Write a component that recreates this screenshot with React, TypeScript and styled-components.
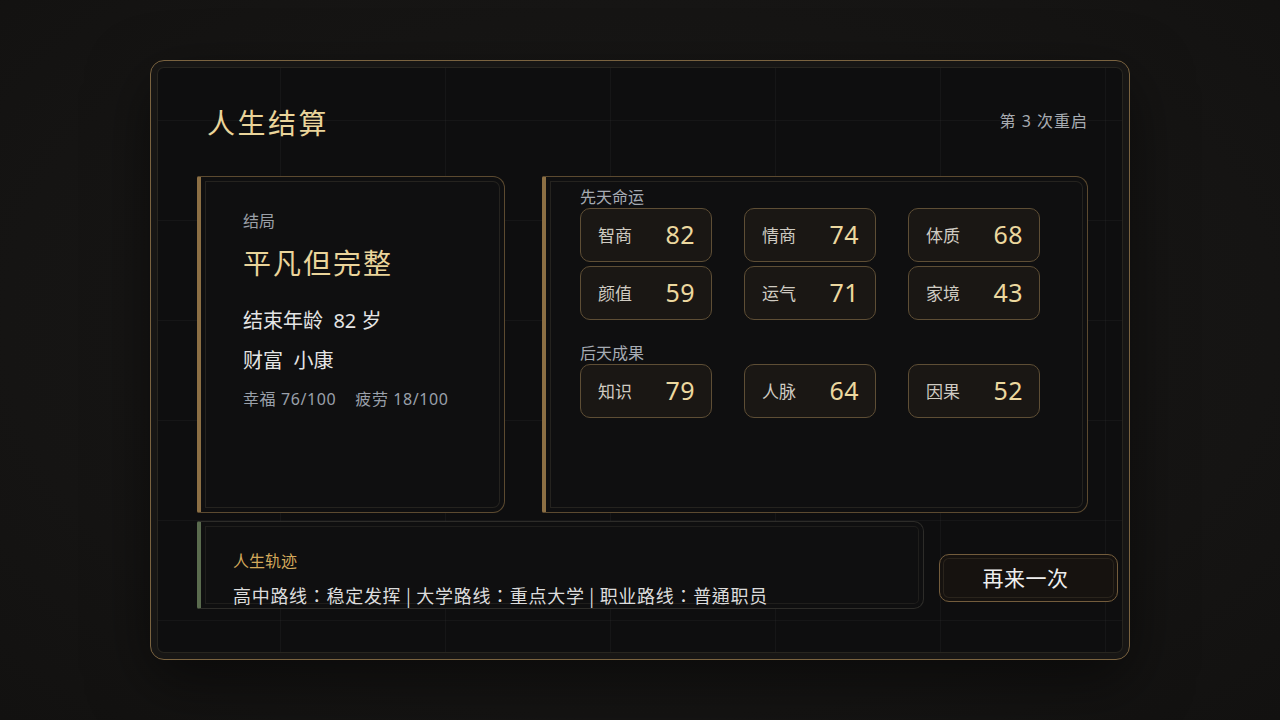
import styled, { createGlobalStyle } from 'styled-components';

const GlobalStyle = createGlobalStyle`
	html, body {
		margin: 0;
		padding: 0;
		background: #161514;
	}
	body {
		font-family: 'Noto Sans', 'Noto Sans CJK SC', sans-serif;
	}
	* {
		box-sizing: border-box;
	}
`;

const innate = [
	{ label: '智商', value: 82 },
	{ label: '情商', value: 74 },
	{ label: '体质', value: 68 },
	{ label: '颜值', value: 59 },
	{ label: '运气', value: 71 },
	{ label: '家境', value: 43 },
];

const acquired = [
	{ label: '知识', value: 79 },
	{ label: '人脉', value: 64 },
	{ label: '因果', value: 52 },
];

const StatGrid = ({ items }: { items: { label: string; value: number }[] }) => (
	<Grid>
		{items.map((s) => (
			<StatBox key={s.label}>
				<StatLabel>{s.label}</StatLabel>
				<StatValue>{s.value}</StatValue>
			</StatBox>
		))}
	</Grid>
);

export default function App() {
	return (
		<Page>
			<GlobalStyle />
			<Panel>
				<Header>
					<Title>人生结算</Title>
					<Restart>第 3 次重启</Restart>
				</Header>
				<TopRow>
					<EndingCard>
						<Caption>结局</Caption>
						<Ending>平凡但完整</Ending>
						<InfoLine $gap={26}>结束年龄&nbsp; 82 岁</InfoLine>
						<InfoLine $gap={12}>财富&nbsp; 小康</InfoLine>
						<Meta>幸福 76/100&nbsp;&nbsp;&nbsp; 疲劳 18/100</Meta>
					</EndingCard>
					<StatsCard>
						<SectionLabel $gap={0}>先天命运</SectionLabel>
						<StatGrid items={innate} />
						<SectionLabel $gap={22}>后天成果</SectionLabel>
						<StatGrid items={acquired} />
					</StatsCard>
				</TopRow>
				<BottomRow>
					<TrackCard>
						<TrackTitle>人生轨迹</TrackTitle>
						<TrackText>高中路线：稳定发挥 | 大学路线：重点大学 | 职业路线：普通职员</TrackText>
					</TrackCard>
					<RetryButton>再来一次</RetryButton>
				</BottomRow>
			</Panel>
		</Page>
	);
}

const Page = styled.div`
	width: 1280px;
	height: 720px;
	display: flex;
	justify-content: center;
	align-items: flex-start;
	padding-top: 60px;
	background: radial-gradient(ellipse at 50% 45%, #1a1918 0%, #151413 70%, #121110 100%);
`;

const Panel = styled.div`
	width: 980px;
	height: 600px;
	padding: 41px 41px 0 46px;
	border: 1px solid #7a6340;
	border-radius: 14px;
	background-color: #0e0e0f;
	background-image: linear-gradient(to right, rgba(255, 255, 255, 0.03) 1px, transparent 1px),
		linear-gradient(to bottom, rgba(255, 255, 255, 0.03) 1px, transparent 1px);
	background-size: 165px 100px;
	background-position: 129px 59px;
	box-shadow: inset 0 0 0 6px rgba(14, 14, 15, 0.6), inset 0 0 0 7px #27251f,
		0 20px 60px rgba(0, 0, 0, 0.5);
`;

const Header = styled.div`
	display: flex;
	justify-content: space-between;
	align-items: center;
	height: 40px;
	margin-bottom: 34px;
`;

const Title = styled.h1`
	margin: 0 0 0 10px;
	font-family: 'Noto Sans CJK SC', sans-serif;
	font-size: 28px;
	line-height: 36px;
	font-weight: 400;
	letter-spacing: 2.5px;
	color: #ead49a;
`;

const Restart = styled.div`
	margin-bottom: 4px;
	font-size: 16px;
	letter-spacing: 1px;
	color: #a8acb2;
`;

const TopRow = styled.div`
	display: grid;
	grid-template-columns: 308px 1fr;
	column-gap: 37px;
	height: 337px;
`;

const Card = styled.div`
	border: 1px solid #5c4a30;
	border-left: 4px solid #8c6f44;
	border-radius: 2px 12px 12px 2px;
	background: #0f0f10;
	box-shadow: inset 0 0 0 4px #0f0f10, inset 0 0 0 5px #25231f;
`;

const EndingCard = styled(Card)`
	padding: 33px 20px 0 42px;
`;

const Caption = styled.div`
	font-size: 16px;
	line-height: 22px;
	color: #9ba0a8;
`;

const Ending = styled.div`
	margin-top: 13px;
	font-size: 28px;
	line-height: 36px;
	font-weight: 400;
	letter-spacing: 2px;
	color: #ead49a;
`;

const InfoLine = styled.div<{ $gap: number }>`
	margin-top: ${(p) => p.$gap}px;
	font-size: 20px;
	line-height: 28px;
	color: #e4e4e4;
`;

const Meta = styled.div`
	margin-top: 13px;
	font-size: 16px;
	line-height: 22px;
	letter-spacing: 0.6px;
	color: #9aa0aa;
`;

const StatsCard = styled(Card)`
	padding: 9px 20px 0 34px;
`;

const SectionLabel = styled.div<{ $gap: number }>`
	margin-top: ${(p) => p.$gap}px;
	font-size: 16px;
	line-height: 22px;
	color: #a6abb3;
`;

const Grid = styled.div`
	display: grid;
	grid-template-columns: repeat(3, 132px);
	column-gap: 32px;
	row-gap: 4px;
`;

const StatBox = styled.div`
	height: 54px;
	display: flex;
	justify-content: space-between;
	align-items: center;
	padding: 0 16px 2px 17px;
	border: 1px solid #5e4e35;
	border-radius: 10px;
	background: #1a1714;
`;

const StatLabel = styled.span`
	font-size: 17px;
	color: #cfcbc2;
`;

const StatValue = styled.span`
	font-family: 'Noto Sans', sans-serif;
	font-size: 25px;
	color: #ecd89f;
	letter-spacing: 0.5px;
`;

const BottomRow = styled.div`
	display: flex;
	align-items: flex-end;
	gap: 15px;
	margin-top: 8px;
	margin-right: -30px;
	height: 88px;
`;

const TrackCard = styled.div`
	width: 728px;
	height: 88px;
	padding: 28px 20px 0 32px;
	border: 1px solid #2d2c29;
	border-left: 4px solid #5a6b4e;
	border-radius: 2px 10px 10px 2px;
	background: #0f0f10;
	box-shadow: inset 0 0 0 4px #0f0f10, inset 0 0 0 5px #1f1e1c;
`;

const TrackTitle = styled.div`
	font-size: 16px;
	line-height: 22px;
	color: #d3a95c;
`;

const TrackText = styled.div`
	margin-top: 11px;
	font-family: 'Noto Sans CJK TC', 'Noto Sans CJK SC', sans-serif;
	font-size: 18px;
	line-height: 24px;
	letter-spacing: 0.7px;
	color: #dcdcdc;
`;

const RetryButton = styled.button`
	width: 179px;
	height: 48px;
	margin-bottom: 7px;
	padding: 0 6px 2px 0;
	border: 1px solid #735c3c;
	border-radius: 10px;
	background: #16120f;
	box-shadow: inset 0 0 0 3px #16120f, inset 0 0 0 4px #2a241c;
	font-family: 'Noto Sans CJK SC', sans-serif;
	font-size: 21px;
	letter-spacing: 0.5px;
	color: #eeeeee;
	cursor: pointer;
`;
